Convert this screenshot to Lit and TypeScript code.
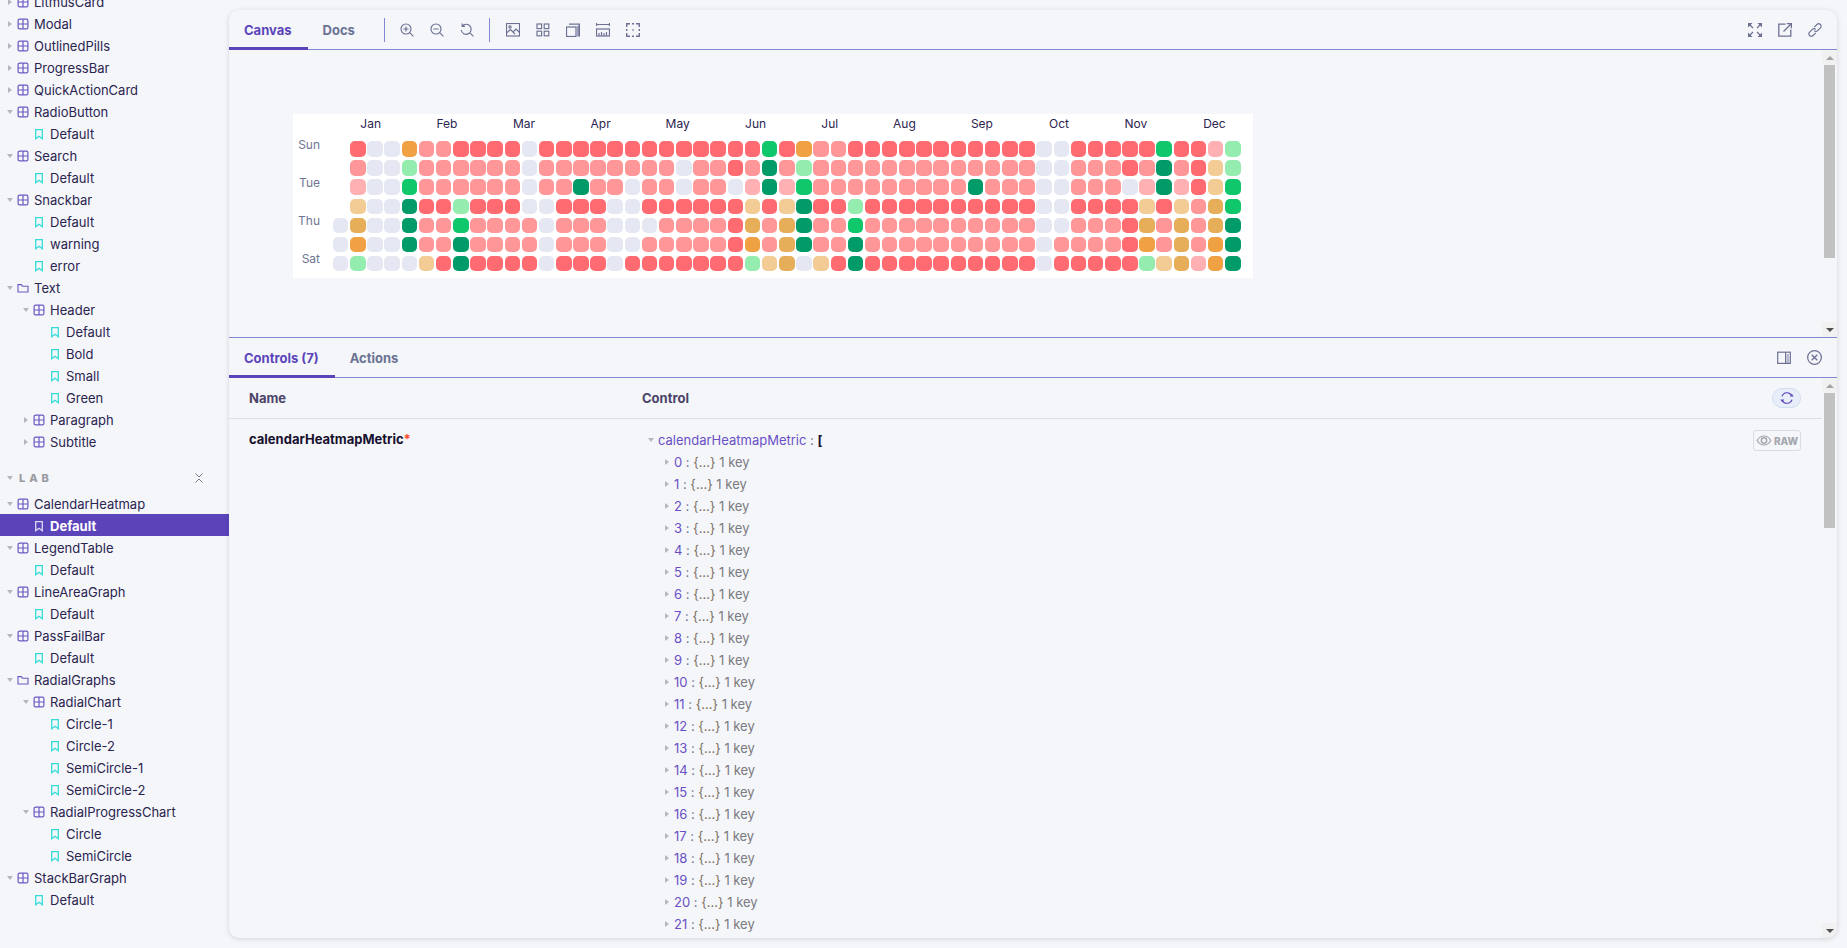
import { LitElement, html, svg, css } from 'lit';
import { customElement } from 'lit/decorators.js';

type Kind = 'comp' | 'story' | 'folder';
type Node = [string, number, Kind, ('open' | 'closed' | '')?];

const TOP: Node[] = [
    ['LitmusCard', 0, 'comp', 'closed'],
    ['Modal', 0, 'comp', 'closed'],
    ['OutlinedPills', 0, 'comp', 'closed'],
    ['ProgressBar', 0, 'comp', 'closed'],
    ['QuickActionCard', 0, 'comp', 'closed'],
    ['RadioButton', 0, 'comp', 'open'],
    ['Default', 1, 'story'],
    ['Search', 0, 'comp', 'open'],
    ['Default', 1, 'story'],
    ['Snackbar', 0, 'comp', 'open'],
    ['Default', 1, 'story'],
    ['warning', 1, 'story'],
    ['error', 1, 'story'],
    ['Text', 0, 'folder', 'open'],
    ['Header', 1, 'comp', 'open'],
    ['Default', 2, 'story'],
    ['Bold', 2, 'story'],
    ['Small', 2, 'story'],
    ['Green', 2, 'story'],
    ['Paragraph', 1, 'comp', 'closed'],
    ['Subtitle', 1, 'comp', 'closed'],
];

const LAB: Node[] = [
    ['CalendarHeatmap', 0, 'comp', 'open'],
    ['Default', 1, 'story'],
    ['LegendTable', 0, 'comp', 'open'],
    ['Default', 1, 'story'],
    ['LineAreaGraph', 0, 'comp', 'open'],
    ['Default', 1, 'story'],
    ['PassFailBar', 0, 'comp', 'open'],
    ['Default', 1, 'story'],
    ['RadialGraphs', 0, 'folder', 'open'],
    ['RadialChart', 1, 'comp', 'open'],
    ['Circle-1', 2, 'story'],
    ['Circle-2', 2, 'story'],
    ['SemiCircle-1', 2, 'story'],
    ['SemiCircle-2', 2, 'story'],
    ['RadialProgressChart', 1, 'comp', 'open'],
    ['Circle', 2, 'story'],
    ['SemiCircle', 2, 'story'],
    ['StackBarGraph', 0, 'comp', 'open'],
    ['Default', 1, 'story'],
];

// label centres, measured from the left edge of the chart
const MONTHS: [string, number][] = [
    ['Jan', 77.7],
    ['Feb', 154],
    ['Mar', 231],
    ['Apr', 307.7],
    ['May', 384.7],
    ['Jun', 462.6],
    ['Jul', 536.8],
    ['Aug', 611.5],
    ['Sep', 689],
    ['Oct', 766],
    ['Nov', 843],
    ['Dec', 921.5],
];
const MONTH_WIDTH = 40;
const DAYS = ['Sun', '', 'Tue', '', 'Thu', '', 'Sat'];

// one letter per week, see COLORS
const HEAT = [
    '-ReeorrRRRReRRRRRRRRRRRRRGRorrRRRRRRRRRRReeRRRRRGRRpg',
    '-reegrrrrrrerrrrrrrrerrRrDrgrrrrrrrrrrrrreerrrRrDrRtg',
    '-peeGrrrrrrerrDrrerrerrepDpGrrrrrrrrrDrrreerrrepDpRtG',
    '-teeDRRgRRReeRRReeRRRRRRtRtDRRgRRRRRRRRRReeRRRRtRtruG',
    'eueeDrrGrrrrerrreeerrrrRuruDrrGrrrrrrrrrreerrrRururuD',
    'eoeeDrrDrrrrerrreerrrrrRoruDrrDrrrrrrrrrrerrrrRoruroD',
    'egeeetRDRRRReRRReRRRRRRRgtuetRDRRRRRRRRRReRRRRRgtupoD',
];

const COLORS: Record<string, string> = {
    e: '#e5e8f2',
    R: '#ff6b70',
    r: '#ff9799',
    p: '#ffb0b3',
    o: '#efa143',
    t: '#f2cc94',
    u: '#e7ae5a',
    g: '#94edae',
    G: '#10c76b',
    D: '#009b68',
};

const icon = (body: unknown, cls = 'ico') =>
    html`<svg class=${cls} viewBox="0 0 14 14" fill="none" stroke="currentColor" stroke-width="1.15">${body}</svg>`;

const ICONS = {
    zoomIn: svg`<circle cx="6" cy="6" r="5"/><path d="M9.7 9.7 13.4 13.4M6 3.4v5.2M3.4 6h5.2"/>`,
    zoomOut: svg`<circle cx="6" cy="6" r="5"/><path d="M9.7 9.7 13.4 13.4M3.4 6h5.2"/>`,
    reset: svg`<path d="M2.2 3.2A5 5 0 1 1 1.2 7M2.2.6v2.8h2.8M9.7 9.7 13.4 13.4"/>`,
    image: svg`<rect x=".5" y=".5" width="13" height="12.5"/><circle cx="4" cy="4" r="1.1"/><path d="M.5 10 4.5 6.5 9 11M7.5 8.5 10 6l3.5 3.5"/>`,
    grid: svg`<rect x="1" y="1" width="4.6" height="4.6"/><rect x="8.2" y="1" width="4.6" height="4.6"/><rect x="1" y="8.2" width="4.6" height="4.6"/><rect x="8.2" y="8.2" width="4.6" height="4.6"/>`,
    layers: svg`<rect x=".5" y="4" width="9.5" height="9.5" stroke-width="1.2"/><path d="M3 1.2h10.4v12.3M12 2.8v10.6" stroke-width="1.2"/>`,
    ruler: svg`<path d="M0 1.5h14M.5 0v3M13.5 0v3"/><rect x=".5" y="6" width="13" height="7" stroke-width="1.2"/><path d="M3 10v3M5.5 9v4M8 10v3M10.5 9v4"/>`,
    outline: svg`<path d="M.7 4V.7H4M10 .7h3.3V4M13.3 10v3.3H10M4 13.3H.7V10M.7 6v2M13.3 6v2M6 .7h2M6 13.3h2" stroke-width="1.4"/><path d="M7 6.3v1.4M6.3 7h1.4"/>`,
    expand: svg`<path d="M.5.5 5 5M13.5.5 9 5M.5 13.5 5 9M13.5 13.5 9 9" stroke-width="1.2"/><path d="M0 0h4.5L0 4.5zM14 0H9.5L14 4.5zM0 14h4.5L0 9.5zM14 14H9.5L14 9.5z" fill="currentColor" stroke="none"/>`,
    open: svg`<path d="M7.5 1.2H.8v12h12V6.5" stroke-width="1.3"/><path d="M5.5 8.5 13 1M8.8.7h4.6v4.6" stroke-width="1.3"/>`,
    link: svg`<path d="M6.2 4.2 9 1.5a2.4 2.4 0 0 1 3.4 3.4L9.6 7.7a2.4 2.4 0 0 1-3.4 0M7.8 9.8 5 12.5a2.4 2.4 0 0 1-3.4-3.4l2.8-2.8a2.4 2.4 0 0 1 3.4 0"/>`,
    panel: svg`<rect x=".7" y="1.2" width="12.6" height="11.2" stroke-width="1.2"/><path d="M8.6 1.2v11.2"/><path d="M9.6 3h2.4v9H9.6z" fill="currentColor" opacity=".45" stroke="none"/>`,
    close: svg`<circle cx="7" cy="7" r="6.4"/><path d="M4.4 4.4 9.6 9.6M9.6 4.4 4.4 9.6" stroke-width="1.2"/>`,
    sync: svg`<path d="M2 5.4A5.2 5.2 0 0 1 11.6 4.6M12 8.6A5.2 5.2 0 0 1 2.4 9.4"/><path d="M13.6 5.6H9.8L11.9 2.7zM.4 8.4h3.8L2.1 11.3z" fill="currentColor" stroke="none"/>`,
    eye: svg`<path d="M.6 7C2.2 4.2 4.4 2.8 7 2.8S11.8 4.2 13.4 7C11.8 9.8 9.6 11.2 7 11.2S2.2 9.8.6 7z"/><circle cx="7" cy="7" r="2.5" stroke-width="1.4"/>`,
};

const nodeIcon = (kind: Kind) => {
    if (kind === 'comp') {
        return html`<svg class="node comp" viewBox="0 0 12 12" fill="none" stroke="currentColor" stroke-width="1.2">
            <rect x="1.1" y="1.1" width="9.8" height="9.8" rx="1.5"/><path d="M6 1v10M1 6h10"/>
        </svg>`;
    }
    if (kind === 'folder') {
        return html`<svg class="node comp" viewBox="0 0 12 12" fill="none" stroke="currentColor" stroke-width="1.1">
            <path d="M1 3V10h10V4.2H5.5L4.3 2.6H1z"/>
        </svg>`;
    }
    return html`<svg class="node story" viewBox="0 0 12 12" fill="none" stroke="currentColor" stroke-width="1.3">
        <path d="M2.7 1.7h6.6v9L6 8.2l-3.3 2.5z"/>
    </svg>`;
};

@customElement('app-root')
export class AppRoot extends LitElement {
    static styles = css`
        :host {
            display: flex;
            height: 948px;
            overflow: hidden;
            background: #f4f6f9;
            color: #2b2450;
            font-family: Inter, 'Noto Sans', sans-serif;
            font-size: 13px;
        }
        * {
            box-sizing: border-box;
        }

        /* sidebar */
        .sidebar {
            width: 229px;
            flex: none;
            overflow: hidden;
        }
        .tree {
            margin-top: -10px;
        }
        .row {
            display: flex;
            align-items: center;
            height: 22px;
            padding-top: 1px;
            white-space: nowrap;
        }
        .row.selected {
            background: #5b44ba;
            color: #fff;
            font-weight: 700;
        }
        .row.selected .node {
            color: #ddd9f3;
        }
        .arrow {
            width: 6px;
            height: 8px;
            flex: none;
            display: flex;
            align-items: center;
            justify-content: center;
        }
        .arrow.closed::before {
            content: '';
            border-left: 4px solid #b4b7c0;
            border-top: 3.5px solid transparent;
            border-bottom: 3.5px solid transparent;
        }
        .arrow.open::before {
            content: '';
            border-top: 4px solid #b4b7c0;
            border-left: 3.5px solid transparent;
            border-right: 3.5px solid transparent;
        }
        .node {
            width: 12px;
            height: 12px;
            flex: none;
            margin: 0 5px 0 4px;
        }
        .node.comp {
            color: #6a59c4;
        }
        .node.story {
            color: #33dcd8;
        }
        .lab {
            display: flex;
            align-items: center;
            height: 22px;
            margin: 15px 0 3px;
            padding: 0 26px 0 7px;
        }
        .lab-title {
            flex: 1;
            margin-left: 6px;
            color: #9a9ca4;
            font-size: 11px;
            font-weight: 800;
            letter-spacing: 0.36em;
        }
        .lab-toggle {
            width: 8px;
            height: 10px;
            color: #777b8e;
        }

        /* main panel */
        .main {
            flex: 1;
            margin: 10px 10px 10px 0;
            display: flex;
            flex-direction: column;
            min-width: 0;
            border-radius: 10px;
            overflow: hidden;
            background: #f4f6f9;
            box-shadow: 0 1px 5px rgba(40, 40, 70, 0.16);
        }
        .bar {
            display: flex;
            align-items: stretch;
            flex: none;
            height: 40px;
            border-bottom: 1px solid #8388d4;
        }
        .tab {
            height: 40px;
            margin-bottom: -1px;
            padding: 2px 16px 0 15px;
            display: flex;
            align-items: center;
            border-bottom: 3px solid transparent;
            color: #6b7394;
            font-weight: 700;
        }
        .tab.active {
            color: #5b44ba;
            border-bottom-color: #5b44ba;
        }
        .sep {
            width: 1px;
            height: 24px;
            margin-left: 13px;
            align-self: center;
            background: #8388d4;
        }
        .sep + .tools + .sep {
            margin-left: 0;
        }
        .tools {
            display: flex;
            align-items: center;
            gap: 16px;
            padding: 0 15px 0 15.5px;
        }
        .tools.end {
            margin-left: auto;
            padding-right: 15.5px;
        }
        .ico {
            width: 14px;
            height: 14px;
            flex: none;
            color: #6c7194;
        }

        /* scrollbar drawn as a column next to the scrolling area */
        .scrollbar {
            width: 15px;
            flex: none;
            display: flex;
            flex-direction: column;
        }
        .sb-btn {
            height: 15px;
            flex: none;
            display: flex;
            align-items: center;
            justify-content: center;
            background: #f1f1f1;
        }
        .sb-up::before {
            content: '';
            border-bottom: 4px solid #a3a3a3;
            border-left: 4px solid transparent;
            border-right: 4px solid transparent;
        }
        .sb-down::before {
            content: '';
            border-top: 4px solid #505050;
            border-left: 4px solid transparent;
            border-right: 4px solid transparent;
        }
        .sb-track {
            flex: 1;
            padding: 0 2px;
        }
        .sb-thumb {
            background: #c1c1c1;
        }

        /* canvas */
        .canvas {
            height: 288px;
            flex: none;
            display: flex;
            border-bottom: 1px solid #8388d4;
        }
        .stage {
            flex: 1;
            padding: 64px;
        }
        .heatmap {
            width: 960px;
            height: 164px;
            background: #fff;
        }
        .months {
            display: flex;
            height: 18px;
            margin-bottom: 9.3px;
            align-items: center;
            font-size: 12px;
            color: #2b2450;
        }
        .months span {
            flex: none;
            text-align: center;
        }
        .grid {
            display: grid;
            grid-template-columns: 38.33px repeat(53, 15.5px);
            grid-auto-rows: 15.5px;
            gap: 3.6px 1.67px;
        }
        .day {
            align-self: start;
            margin-top: -4.5px;
            padding-right: 11.3px;
            text-align: right;
            line-height: 15.5px;
            font-size: 12px;
            color: #6f7592;
        }
        .cell {
            border-radius: 5px;
        }

        /* addon panel */
        .tools.panel-actions {
            gap: 15.5px;
        }
        .tools.panel-actions .ico:last-child {
            width: 15px;
            height: 15px;
        }
        .addon {
            flex: 1;
            min-height: 0;
            display: flex;
        }
        .table {
            flex: 1;
            min-width: 0;
        }
        .head,
        .prop {
            display: grid;
            grid-template-columns: 393px 1fr auto;
            padding: 0 21px 0 20px;
        }
        .head {
            height: 41px;
            align-items: center;
            border-bottom: 1px solid #dcdee4;
            color: #4b4468;
            font-weight: 700;
        }
        .sync {
            width: 29px;
            height: 20px;
            display: flex;
            align-items: center;
            justify-content: center;
            border: 1px solid #d3ddf0;
            border-radius: 10px;
            background: #e7eefa;
        }
        .sync .ico {
            width: 14px;
            height: 14px;
            color: #5b44ba;
        }
        .prop {
            padding-top: 10px;
        }
        .prop-name {
            line-height: 20px;
            color: #17102f;
            font-weight: 700;
        }
        .req {
            color: #ff4d2e;
        }
        .json-row {
            display: flex;
            align-items: center;
            height: 22px;
            white-space: nowrap;
            color: #7a7a80;
        }
        .json-root {
            padding-left: 6px;
        }
        .json-item {
            padding-left: 22px;
        }
        .json-root .arrow,
        .json-item .arrow {
            width: 5px;
            margin-right: 5px;
        }
        .json-item .arrow {
            margin-right: 5px;
        }
        .key {
            color: #6a50c6;
        }
        .colon {
            color: #6f7592;
        }
        .brace {
            color: #7d6f62;
        }
        .bracket {
            color: #17102f;
            font-weight: 700;
        }
        .raw {
            display: flex;
            align-items: center;
            gap: 2px;
            height: 21px;
            margin-top: 1px;
            padding: 0 2px;
            border: 1px solid #dcdcdf;
            border-radius: 3px;
            color: #a4a6ae;
            font-size: 10px;
            font-weight: 800;
        }
        .raw .ico {
            width: 16px;
            height: 15px;
            color: #a4a6ae;
        }
    `;

    private renderNode([label, depth, kind, arrow]: Node, selected = false) {
        return html`<div class="row ${selected ? 'selected' : ''}" style="padding-left:${7 + depth * 16}px">
            <span class="arrow ${arrow ?? ''}"></span>
            ${nodeIcon(kind)}
            <span>${label}</span>
        </div>`;
    }

    private renderScrollbar(thumbTop: number, thumbHeight: number) {
        return html`<div class="scrollbar">
            <div class="sb-btn sb-up"></div>
            <div class="sb-track">
                <div class="sb-thumb" style="margin-top:${thumbTop}px;height:${thumbHeight}px"></div>
            </div>
            <div class="sb-btn sb-down"></div>
        </div>`;
    }

    private renderHeatmap() {
        return html`<div class="heatmap">
            <div class="months">
                ${MONTHS.map(([name, centre], i) => {
                    const previousEdge = i === 0 ? 0 : MONTHS[i - 1][1] + MONTH_WIDTH / 2;
                    const gap = centre - MONTH_WIDTH / 2 - previousEdge;
                    return html`<span style="width:${MONTH_WIDTH}px;margin-left:${gap}px">${name}</span>`;
                })}
            </div>
            <div class="grid">
                ${HEAT.map(
                    (row, i) => html`<span class="day">${DAYS[i]}</span>
                        ${[...row].map((c) =>
                            c === '-'
                                ? html`<span></span>`
                                : html`<span class="cell" style="background:${COLORS[c]}"></span>`,
                        )}`,
                )}
            </div>
        </div>`;
    }

    override render() {
        const items = Array.from({ length: 22 }, (_, i) => i);
        return html`
            <aside class="sidebar">
                <div class="tree">
                    ${TOP.map((n) => this.renderNode(n))}
                    <div class="lab">
                        <span class="arrow open"></span>
                        <span class="lab-title">LAB</span>
                        <svg class="lab-toggle" viewBox="0 0 8 10" fill="none" stroke="currentColor">
                            <path d="M.5.5 4 4 7.5.5M.5 9.5 4 6l3.5 3.5" />
                        </svg>
                    </div>
                    ${LAB.map((n, i) => this.renderNode(n, i === 1))}
                </div>
            </aside>

            <main class="main">
                <div class="bar">
                    <div class="tab active">Canvas</div>
                    <div class="tab">Docs</div>
                    <div class="sep"></div>
                    <div class="tools">${icon(ICONS.zoomIn)}${icon(ICONS.zoomOut)}${icon(ICONS.reset)}</div>
                    <div class="sep"></div>
                    <div class="tools">
                        ${icon(ICONS.image)}${icon(ICONS.grid)}${icon(ICONS.layers)}${icon(ICONS.ruler)}${icon(ICONS.outline)}
                    </div>
                    <div class="tools end">${icon(ICONS.expand)}${icon(ICONS.open)}${icon(ICONS.link)}</div>
                </div>

                <div class="canvas">
                    <div class="stage">${this.renderHeatmap()}</div>
                    ${this.renderScrollbar(0, 193)}
                </div>

                <div class="bar">
                    <div class="tab active">Controls (7)</div>
                    <div class="tab">Actions</div>
                    <div class="tools end panel-actions">${icon(ICONS.panel)}${icon(ICONS.close)}</div>
                </div>

                <div class="addon">
                    <div class="table">
                        <div class="head">
                            <span>Name</span>
                            <span>Control</span>
                            <span class="sync">${icon(ICONS.sync)}</span>
                        </div>
                        <div class="prop">
                            <div class="prop-name">calendarHeatmapMetric<span class="req">*</span></div>
                            <div>
                                <div class="json-row json-root">
                                    <span class="arrow open"></span>
                                    <span class="key">calendarHeatmapMetric</span>&nbsp;<span class="colon">:</span>&nbsp;<span class="bracket">[</span>
                                </div>
                                ${items.map(
                                    (i) => html`<div class="json-row json-item">
                                        <span class="arrow closed"></span>
                                        <span class="key">${i}</span>&nbsp;<span class="colon">:</span>&nbsp;<span class="brace">{...}</span>&nbsp;1 key
                                    </div>`,
                                )}
                            </div>
                            <div><span class="raw">${icon(ICONS.eye)}RAW</span></div>
                        </div>
                    </div>
                    ${this.renderScrollbar(0, 135)}
                </div>
            </main>
        `;
    }
}
